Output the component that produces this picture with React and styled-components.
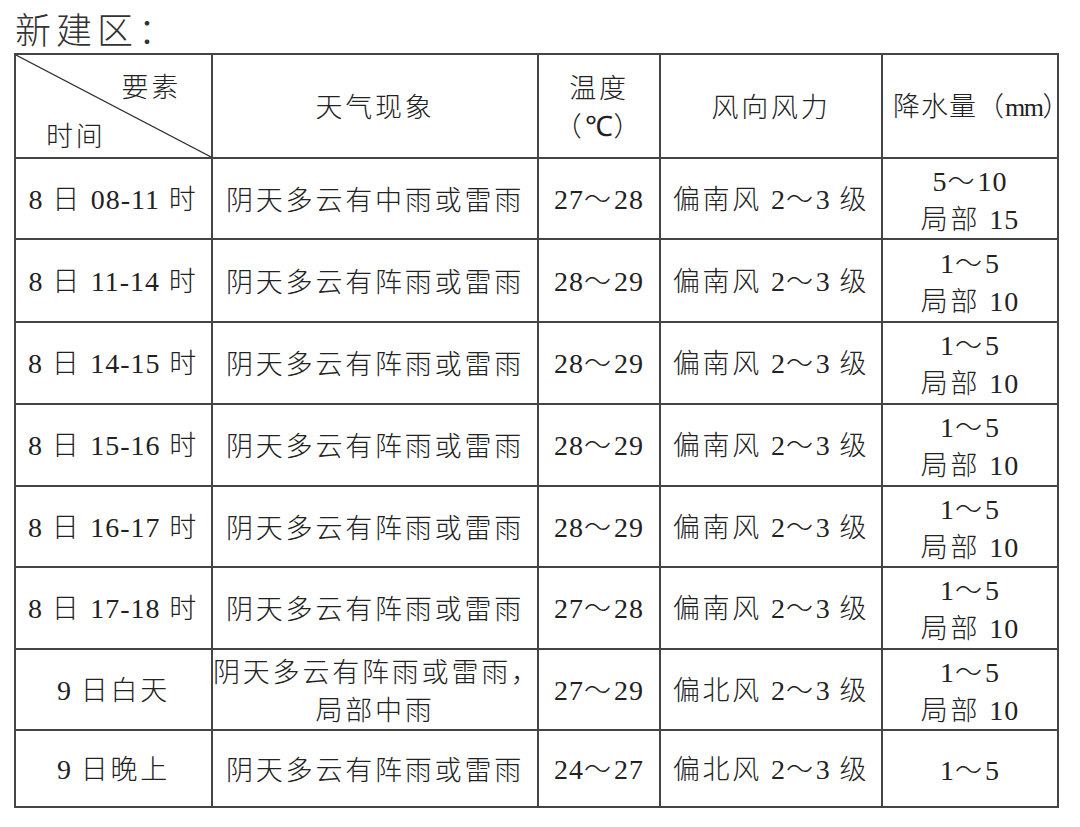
import React from "react";
import styled, { createGlobalStyle } from "styled-components";

const CJK = `"Noto Sans CJK SC", "Noto Sans CJK JP", sans-serif`;
const LATIN = `"Liberation Serif", "Times New Roman", serif`;

const Global = createGlobalStyle`
  html, body { margin: 0; padding: 0; background: #fff; }
  body { font-family: ${CJK}; color: #1e1e1e; }
`;

const Page = styled.div`
  width: 1080px;
  height: 827px;
  padding: 6px 0 0 14px;
  box-sizing: border-box;
  background: #fff;
  font-family: ${CJK};
`;

const Title = styled.h1`
  margin: 0 0 0 1px;
  height: 47px;
  font-weight: 300;
  font-size: 36px;
  line-height: 44px;
  letter-spacing: 5px;
  color: #333;
  font-family: ${CJK};
`;

const Table = styled.table`
  border-collapse: collapse;
  table-layout: fixed;
  width: 1044px;
  font-family: ${CJK};
  font-size: 27px;
  letter-spacing: 2.8px;
`;

const Cell = styled.td`
  border: 2px solid #444;
  padding: 0 0 0 ${(p) => p.$pl || 0}px;
  text-align: center;
  vertical-align: middle;
  line-height: 38px;
  height: ${(p) => p.$h}px;
  white-space: nowrap;
  color: #222;
  font-family: ${CJK};
  font-weight: 300;
  letter-spacing: ${(p) => (p.$tight ? "1px" : "2.8px")};
`;

const HeadCell = styled(Cell).attrs({ as: "th" })``;

const DiagCell = styled(HeadCell)`
  position: relative;
`;

const Diagonal = styled.svg`
  position: absolute;
  inset: 0;
  width: 100%;
  height: 100%;
`;

const DiagTop = styled.span`
  position: absolute;
  top: 12px;
  right: 30px;
`;

const DiagBottom = styled.span`
  position: absolute;
  bottom: 3px;
  left: 30px;
`;

const Line = styled.div`
  display: block;
  height: 38px;
  line-height: 38px;
`;

const Num = styled.span`
  font-family: ${LATIN};
  font-weight: 400;
  font-size: 28px;
  letter-spacing: 1px;
`;

const Narrow = styled(Num)`
  letter-spacing: -1.5px;
  font-size: 26px;
`;

const cols = [197, 326, 122, 222, 176];

const rows = [
  ["8 日 08-11 时", "阴天多云有中雨或雷雨", "27～28", "偏南风 2～3 级", ["5～10", "局部 15"]],
  ["8 日 11-14 时", "阴天多云有阵雨或雷雨", "28～29", "偏南风 2～3 级", ["1～5", "局部 10"]],
  ["8 日 14-15 时", "阴天多云有阵雨或雷雨", "28～29", "偏南风 2～3 级", ["1～5", "局部 10"]],
  ["8 日 15-16 时", "阴天多云有阵雨或雷雨", "28～29", "偏南风 2～3 级", ["1～5", "局部 10"]],
  ["8 日 16-17 时", "阴天多云有阵雨或雷雨", "28～29", "偏南风 2～3 级", ["1～5", "局部 10"]],
  ["8 日 17-18 时", "阴天多云有阵雨或雷雨", "27～28", "偏南风 2～3 级", ["1～5", "局部 10"]],
  ["9 日白天", ["阴天多云有阵雨或雷雨，", "局部中雨"], "27～29", "偏北风 2～3 级", ["1～5", "局部 10"]],
  ["9 日晚上", "阴天多云有阵雨或雷雨", "24～27", "偏北风 2～3 级", ["1～5"]],
];

const heights = [79, 81, 80, 80, 79, 80, 79, 75];

const Mixed = ({ text }) =>
  text.split(/([0-9\-]+)/).map((part, i) =>
    /^[0-9\-]+$/.test(part) ? <Num key={i}>{part}</Num> : part
  );

const Content = ({ v }) =>
  Array.isArray(v) ? (
    v.map((t, i) => (
      <Line key={i}>
        <Mixed text={t} />
      </Line>
    ))
  ) : (
    <Mixed text={v} />
  );

export default function App() {
  return (
    <Page>
      <Global />
      <Title>新建区：</Title>
      <Table>
        <colgroup>
          {cols.map((w, i) => (
            <col key={i} style={{ width: w }} />
          ))}
        </colgroup>
        <thead>
          <tr>
            <DiagCell $h={102}>
              <Diagonal viewBox="0 0 100 100" preserveAspectRatio="none">
                <line x1="0" y1="0" x2="100" y2="100" stroke="#333" strokeWidth="1.2" vectorEffect="non-scaling-stroke" />
              </Diagonal>
              <DiagTop>要素</DiagTop>
              <DiagBottom>时间</DiagBottom>
            </DiagCell>
            <HeadCell $h={102}>天气现象</HeadCell>
            <HeadCell $h={102}>
              <Line>温度</Line>
              <Line>
                （<Num>℃</Num>）
              </Line>
            </HeadCell>
            <HeadCell $h={102}>风向风力</HeadCell>
            <HeadCell $h={102} $tight $pl={10}>
              降水量（<Narrow>mm</Narrow>）
            </HeadCell>
          </tr>
        </thead>
        <tbody>
          {rows.map((r, i) => (
            <tr key={i}>
              {r.map((v, j) => (
                <Cell key={j} $h={heights[i]}>
                  <Content v={v} />
                </Cell>
              ))}
            </tr>
          ))}
        </tbody>
      </Table>
    </Page>
  );
}
